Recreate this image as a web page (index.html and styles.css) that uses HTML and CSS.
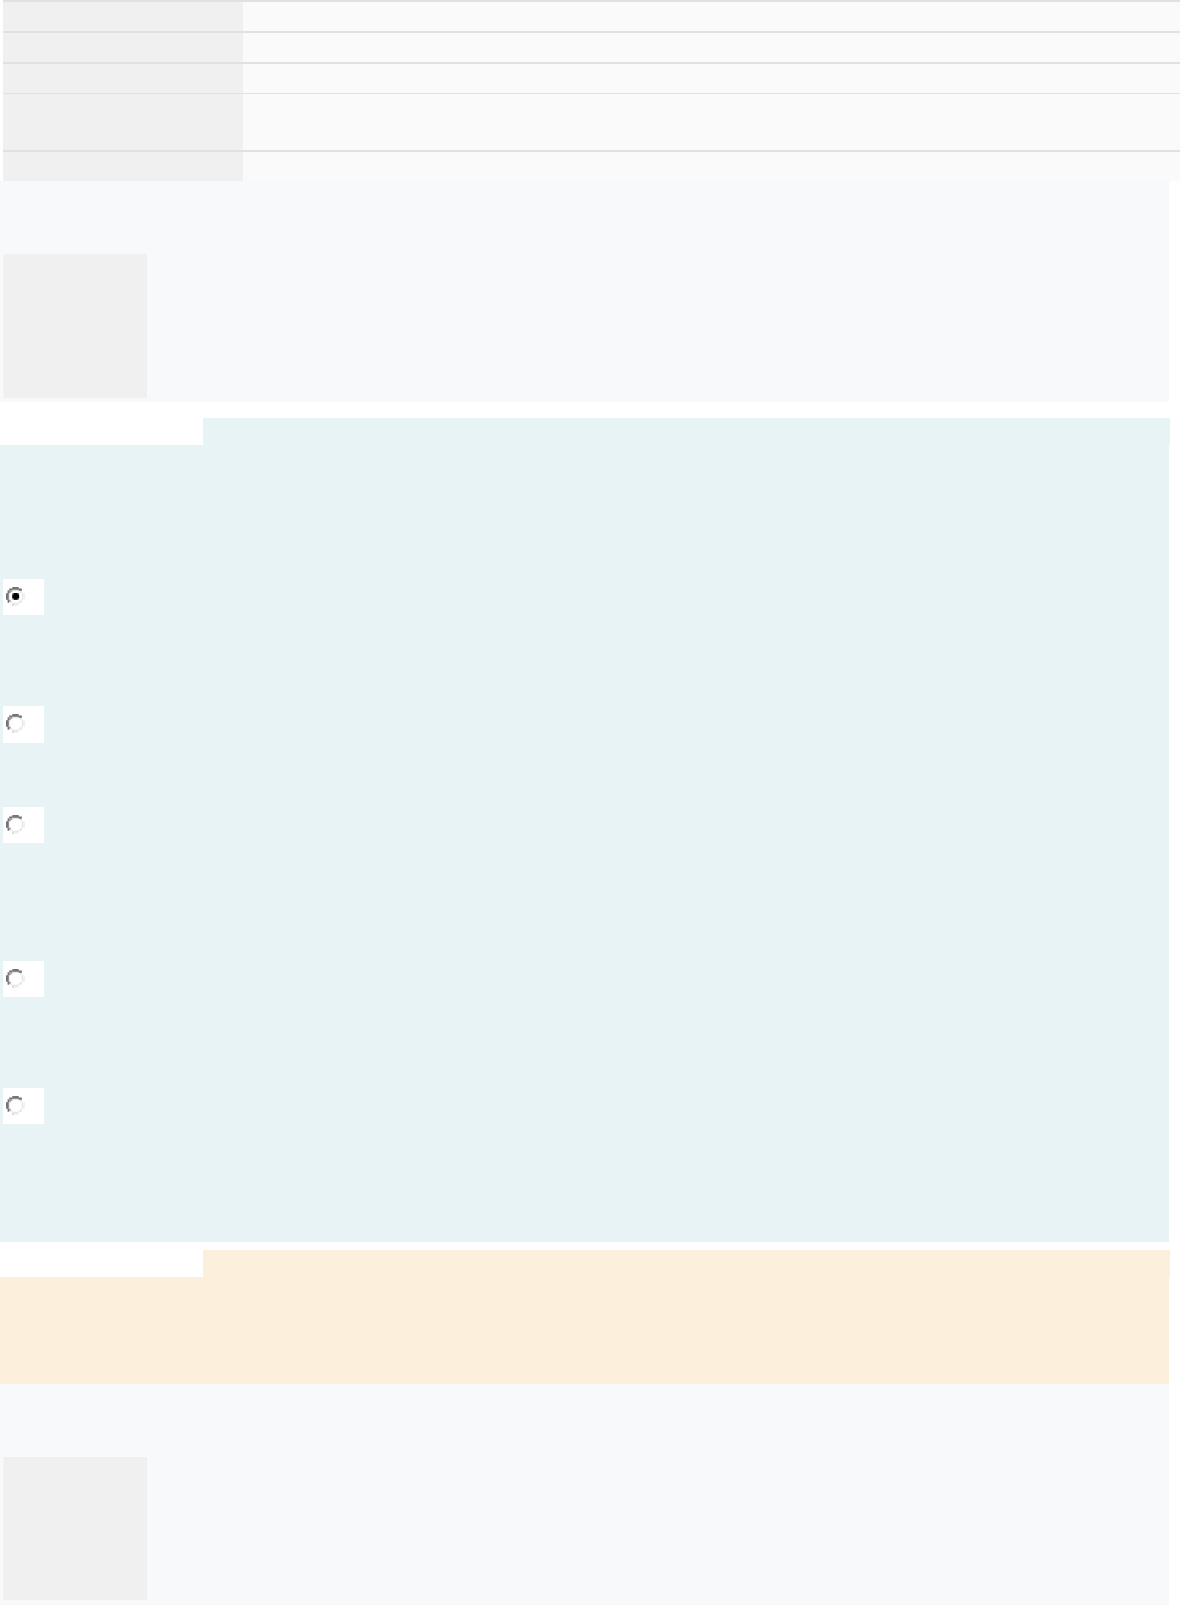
FILE: index.html
```
<!DOCTYPE html>
<html lang="en">

<head>
    <meta charset="UTF-8">
    <meta name="viewport" content="width=device-width, initial-scale=1.0">
    <title>Quiz review</title>
    <link rel="stylesheet" href="styles.css">
</head>

<body>
    <!-- shared radio drawing, 12x12 grid -->
    <svg class="defs" aria-hidden="true">
        <symbol id="radio" viewBox="0 0 12 12">
            <path fill="#9a9a9a" d="M4 1h4v1H4zM2 2h2v1H3v1H2zM1 4h1v4H1zM8 1.5h2v1H8zM2 8h1v1.5H2z" />
            <path fill="#747474" d="M4 0h4v1h2v1H8V1.4H4V2H2v2h-.6v4H2v2H1V8H0V4h1V2h1V1h2z" />
            <path fill="#e5e5e5" d="M9 2.5h1V4h1v4h-1v2H8v1H4v-1H2.500V9H4v1h4V9h1V8h1V4H9z" />
            <path fill="#f0f0f0" d="M11 4h1v4h-1zM4 11h4v1H4z" />
            <path fill="#a0a0a0" d="M4 11h.7v.7H4z" />
        </symbol>
    </svg>

    <table class="summary">
        <tr><th></th><td></td></tr>
        <tr><th></th><td></td></tr>
        <tr><th></th><td></td></tr>
        <tr class="grade"><th></th><td></td></tr>
        <tr><th></th><td></td></tr>
    </table>

    <div class="info">
        <div class="info-box"></div>
    </div>

    <div class="question">
        <div class="strip"></div>
        <div class="answers">
            <div class="answer first">
                <svg class="radio" viewBox="0 0 12 12">
                    <use href="#radio" />
                    <path fill="#777" d="M4 3.800h4.200V8H4z" />
                    <path d="M5 3.800h2.300v1h1v2.300h-1v1H5v-1H4V4.800h1z" />
                </svg>
            </div>
            <div class="answer second"><svg class="radio"><use href="#radio" /></svg></div>
            <div class="answer third"><svg class="radio"><use href="#radio" /></svg></div>
            <div class="answer fourth"><svg class="radio"><use href="#radio" /></svg></div>
            <div class="answer fifth"><svg class="radio"><use href="#radio" /></svg></div>
        </div>
    </div>

    <div class="feedback">
        <div class="strip"></div>
        <div class="feedback-body"></div>
    </div>

    <div class="info">
        <div class="info-box last"></div>
    </div>
</body>

</html>
```
FILE: styles.css
```
* {
    margin: 0;
    padding: 0;
    box-sizing: border-box
}

body {
    background: #fff;
    font-family: "Liberation Sans", Arial, sans-serif
}

.defs {
    display: none
}

/* attempt summary */
.summary {
    width: 1177px;
    margin-left: 3px;
    border-spacing: 0;
    table-layout: fixed
}

.summary tr {
    height: 31px
}

.summary th,
.summary td {
    border-top: 2px solid #dee2e6
}

.summary th {
    width: 240px;
    background: #f0f0f0
}

.summary td {
    background: #fafafa
}

.summary .grade {
    height: 57px
}

.summary .grade th,
.summary .grade td {
    border-top: 1px solid #dfe1e2
}

.info {
    width: 1169px;
    height: 221px;
    padding: 73px 0 0 3px;
    background: #f8f9fb
}

.info-box {
    width: 144px;
    height: 144px;
    background: #f0f0f0;
    border-left: 1px solid #f2f3f3
}

.info-box.last {
    height: 143px
}

/* coloured blocks with the white notch on the left */
.question {
    margin-top: 16px
}

.feedback {
    margin-top: 8px
}

.strip {
    width: 967px;
    height: 27px;
    margin-left: 203px
}

.question .strip,
.answers {
    background: #e7f3f5
}

.feedback .strip,
.feedback-body {
    background: #fcefdc
}

.answers {
    width: 1169px;
    height: 797px;
    padding: 134px 0 0 3px
}

.answer {
    width: 41px;
    height: 36px;
    padding: 8px 0 0 3px;
    background: #fff
}

.second {
    height: 37px;
    margin-top: 91px
}

.third {
    margin-top: 64px
}

.fourth {
    margin-top: 118px
}

.fifth {
    margin-top: 91px
}

.radio {
    display: block;
    width: 19px;
    height: 19px
}

.feedback-body {
    width: 1169px;
    height: 107px
}
```
